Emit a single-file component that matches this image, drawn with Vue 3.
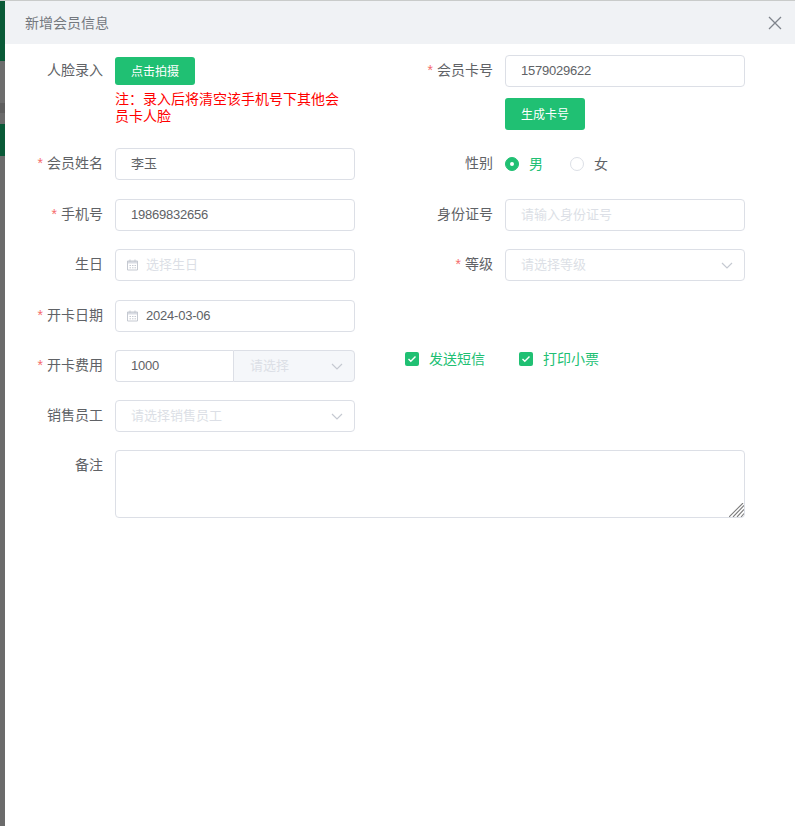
<script setup>
const calendarPath = 'M1.5 3h10v9h-10z M4 1.5v2.5 M9 1.5v2.5 M3.5 7.5h1.5 M6 7.5h1.5 M8.5 7.5h1.5 M3.5 9.8h1.5 M6 9.8h1.5 M8.5 9.8h1.5'
</script>

<template>
  <div class="page">
    <div class="backdrop">
      <div class="bd green h61"></div>
      <div class="bd gray h42"></div>
      <div class="bd dim h10"></div>
      <div class="bd gray2 h11"></div>
      <div class="bd green h32"></div>
      <div class="bd rest"></div>
    </div>

    <div class="dialog">
      <header class="head">
        <span class="title">新增会员信息</span>
        <svg class="close" width="14" height="14" viewBox="0 0 14 14">
          <path d="M1 1l12 12M13 1L1 13" stroke="#7f848c" stroke-width="1.3" fill="none" />
        </svg>
      </header>

      <div class="form">
        <div class="row">
          <div class="item">
            <label class="label">人脸录入</label>
            <div class="control">
              <button class="btn small">点击拍摄</button>
              <p class="note">注：录入后将清空该手机号下其他会员卡人脸</p>
            </div>
          </div>
          <div class="item">
            <label class="label"><i>*</i>会员卡号</label>
            <div class="control">
              <div class="input num">1579029622</div>
              <button class="btn tall">生成卡号</button>
            </div>
          </div>
        </div>

        <div class="row wide">
          <div class="item">
            <label class="label"><i>*</i>会员姓名</label>
            <div class="input">李玉</div>
          </div>
          <div class="item">
            <label class="label">性别</label>
            <div class="radios">
              <span class="radio on"></span><span class="opt on-text">男</span>
              <span class="radio second"></span><span class="opt">女</span>
            </div>
          </div>
        </div>

        <div class="row">
          <div class="item">
            <label class="label"><i>*</i>手机号</label>
            <div class="input num">19869832656</div>
          </div>
          <div class="item">
            <label class="label">身份证号</label>
            <div class="input ph">请输入身份证号</div>
          </div>
        </div>

        <div class="row wide">
          <div class="item">
            <label class="label">生日</label>
            <div class="input ph date">
              <svg class="cal" width="13" height="14" viewBox="0 0 13 14">
                <rect x="1.5" y="3" width="10" height="2.5" fill="#d9dce3" />
                <path :d="calendarPath" stroke="#c5c9d1" stroke-width="1" fill="none" />
              </svg>
              选择生日
            </div>
          </div>
          <div class="item">
            <label class="label"><i>*</i>等级</label>
            <div class="input ph select">
              请选择等级
              <svg class="chev" width="12" height="7" viewBox="0 0 12 7">
                <path d="M1 1l5 5 5-5" stroke="#c5c9d1" stroke-width="1.2" fill="none" />
              </svg>
            </div>
          </div>
        </div>

        <div class="row">
          <div class="item">
            <label class="label"><i>*</i>开卡日期</label>
            <div class="input date num">
              <svg class="cal" width="13" height="14" viewBox="0 0 13 14">
                <rect x="1.5" y="3" width="10" height="2.5" fill="#d9dce3" />
                <path :d="calendarPath" stroke="#c5c9d1" stroke-width="1" fill="none" />
              </svg>
              2024-03-06
            </div>
          </div>
        </div>

        <div class="row">
          <div class="item">
            <label class="label"><i>*</i>开卡费用</label>
            <div class="group">
              <div class="input num left">1000</div>
              <div class="input ph right select">
                请选择
                <svg class="chev" width="12" height="7" viewBox="0 0 12 7">
                  <path d="M1 1l5 5 5-5" stroke="#c5c9d1" stroke-width="1.2" fill="none" />
                </svg>
              </div>
            </div>
          </div>
          <div class="item checks">
            <span class="check">
              <svg width="10" height="8" viewBox="0 0 10 8"><path d="M1.5 4l2.3 2.3L8.5 1.5" stroke="#fff" stroke-width="1.4" fill="none" /></svg>
            </span>
            <span class="check-text">发送短信</span>
            <span class="check">
              <svg width="10" height="8" viewBox="0 0 10 8"><path d="M1.5 4l2.3 2.3L8.5 1.5" stroke="#fff" stroke-width="1.4" fill="none" /></svg>
            </span>
            <span class="check-text">打印小票</span>
          </div>
        </div>

        <div class="row">
          <div class="item">
            <label class="label">销售员工</label>
            <div class="input ph select">
              请选择销售员工
              <svg class="chev" width="12" height="7" viewBox="0 0 12 7">
                <path d="M1 1l5 5 5-5" stroke="#c5c9d1" stroke-width="1.2" fill="none" />
              </svg>
            </div>
          </div>
        </div>

        <div class="item full">
          <label class="label">备注</label>
          <div class="area-wrap">
            <textarea class="area"></textarea>
            <svg class="grip" width="15" height="14" viewBox="0 0 15 14">
              <path d="M0 14L14 0M4 14L15 2.5M8 14L15 6.5M12 14L15 10.5" stroke="#7d7d7d" stroke-width="1.1" fill="none" />
            </svg>
          </div>
        </div>
      </div>
    </div>
  </div>
</template>

<style scoped>
.page {
  display: flex;
  min-height: 826px;
  overflow: hidden;
  background: #fff;
  font-family: "Liberation Sans", "Noto Sans CJK SC", sans-serif;
  font-size: 14px;
  color: #606266;
  border-top: 1px solid #c9cbca;
  box-sizing: border-box;
}
.backdrop { width: 5px; flex: none; display: flex; flex-direction: column; }
.bd { flex: none; }
.green { background: #0a5a37; }
.gray { background: #6d6d6d; }
.dim { background: #5f5f5f; }
.gray2 { background: #6b6b6b; }
.h61 { height: 60px; }
.h42 { height: 42px; }
.h10 { height: 10px; }
.h11 { height: 11px; }
.h32 { height: 32px; }
.rest { flex: 1; background: #6b6b6b; }

.dialog { flex: 1; min-width: 0; }
.head {
  height: 43px;
  background: #f0f2f5;
  display: flex;
  align-items: center;
  justify-content: space-between;
  padding: 0 13px 0 20px;
}
.title { font-size: 14px; color: #74787e; margin-bottom: 2px; }
.close { display: block; margin-top: 1px; }

.form { padding-top: 11px; }
.row { display: flex; margin-bottom: 18px; }
.row.wide { margin-bottom: 19px; }
.item { display: flex; width: 390px; flex: none; align-items: flex-start; }
.item.full { width: auto; }
.label {
  width: 98px;
  margin-right: 12px;
  flex: none;
  text-align: right;
  line-height: 30px;
  color: #606266;
}
.label i { font-style: normal; color: #f56c6c; margin-right: 4px; }
.control { width: 240px; }

.input {
  position: relative;
  width: 240px;
  height: 32px;
  box-sizing: border-box;
  border: 1px solid #dcdfe6;
  border-radius: 4px;
  padding: 0 15px;
  font-size: 13px;
  line-height: 29px;
  background: #fff;
  color: #606266;
  white-space: nowrap;
}
.num { letter-spacing: -0.22px; }
.ph { color: #dcdfe6; }
.date { padding-left: 30px; }
.cal { position: absolute; left: 10px; top: 8px; }
.chev { position: absolute; right: 11px; top: 12px; }

.btn {
  display: block;
  width: 80px;
  border: 0;
  border-radius: 3px;
  background: #20c073;
  color: #fff;
  font: inherit;
  font-size: 12px;
  padding: 0;
}
.btn.small { height: 28px; margin-top: 2px; padding-bottom: 1px; }
.btn.tall { height: 32px; margin-top: 11px; padding-bottom: 2px; }
.note {
  margin: 6px 0 0;
  width: 230px;
  color: #ff0000;
  font-size: 14px;
  line-height: 17px;
}

.radios { display: flex; align-items: center; height: 32px; }
.radio {
  width: 14px;
  height: 14px;
  box-sizing: border-box;
  border-radius: 50%;
  border: 1px solid #dcdfe6;
  background: #fff;
}
.radio.on { background: #20c073; border-color: #20c073; position: relative; }
.radio.on::after {
  content: "";
  position: absolute;
  left: 4px;
  top: 4px;
  width: 4px;
  height: 4px;
  border-radius: 50%;
  background: #fff;
}
.radio.second { margin-left: 27px; }
.opt { margin-left: 10px; margin-bottom: 2px; }
.on-text { color: #20c073; }

.group { display: flex; width: 240px; }
.group .left { width: 118px; border-radius: 4px 0 0 4px; border-right: 0; }
.group .right {
  width: 122px;
  background: #f5f7fa;
  border-radius: 0 4px 4px 0;
  padding-left: 16px;
}

.checks { align-items: center; height: 18px; padding-left: 10px; }
.check {
  width: 14px;
  height: 14px;
  background: #20c073;
  border-radius: 2px;
  display: flex;
  align-items: center;
  justify-content: center;
  flex: none;
}
.check-text { color: #20c073; margin: 0 34px 2px 10px; }

.area-wrap { position: relative; width: 630px; height: 68px; }
.area {
  display: block;
  width: 100%;
  height: 100%;
  box-sizing: border-box;
  border: 1px solid #dcdfe6;
  border-radius: 4px;
  outline: 0;
  padding: 5px 15px;
  resize: none;
  background: #fff;
  font: inherit;
}
.grip { position: absolute; right: 1px; bottom: 1px; pointer-events: none; }
</style>

<style>
html, body { margin: 0; background: #fff; }
</style>
